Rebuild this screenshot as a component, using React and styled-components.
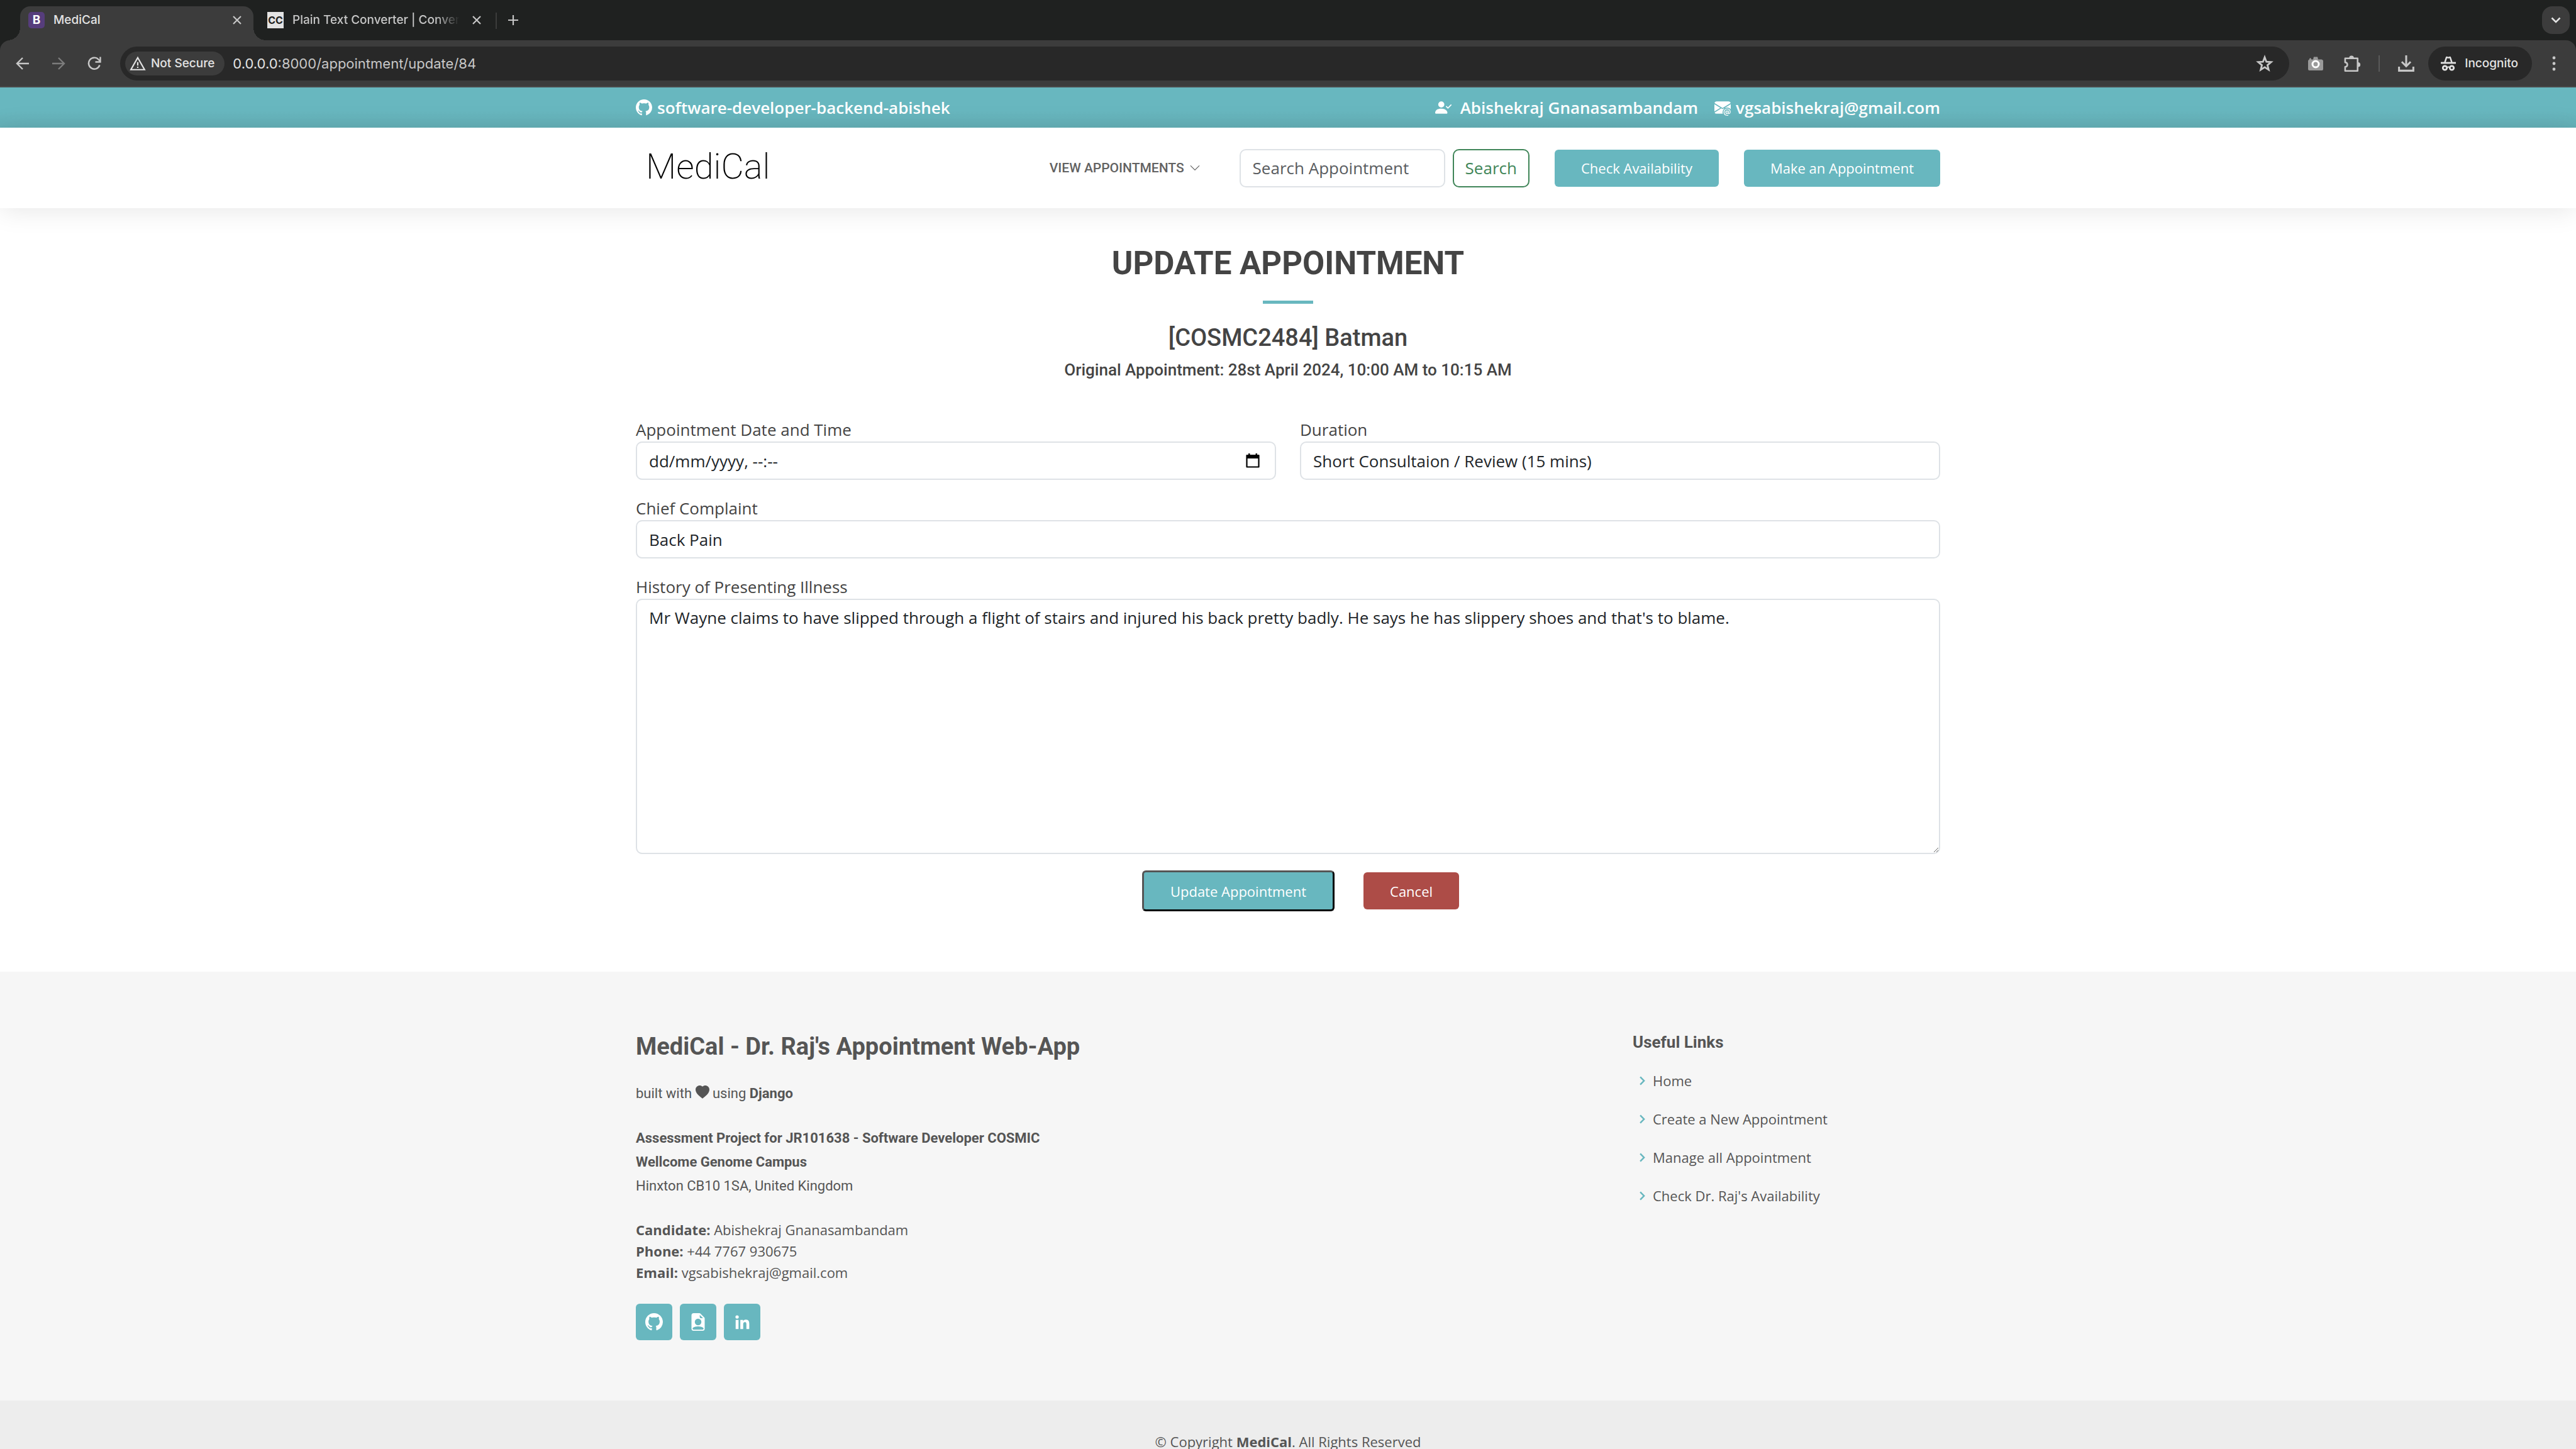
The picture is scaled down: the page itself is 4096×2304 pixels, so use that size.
import React, { useState } from "react";
import styled, { createGlobalStyle, css } from "styled-components";
import {
  BsGithub,
  BsPersonCheckFill,
  BsEnvelopeAtFill,
  BsChevronDown,
  BsHeartFill,
  BsFileEarmarkPersonFill,
} from "react-icons/bs";
import { BiChevronRight, BiLogoLinkedin } from "react-icons/bi";

const ACCENT = "#68b7bf";
const SANS = `"Open Sans", "Noto Sans", sans-serif`;
const HEADING = `Roboto, "Noto Sans", sans-serif`;
const SYSTEM = `Inter, "Liberation Sans", sans-serif`;

const GlobalStyle = createGlobalStyle`
  *, *::before, *::after { box-sizing: border-box; }
  body { margin: 0; background: #fff; color: #444; font-family: ${SANS}; font-size: 26px; line-height: 38px; }
  h1, h2, h3, h4, h5, h6, p, ul { margin: 0; padding: 0; }
  ul { list-style: none; }
  a { color: inherit; text-decoration: none; }
  button, input, select, textarea { font: inherit; color: inherit; margin: 0; }
  button { cursor: pointer; }
  svg { display: block; flex: none; }
`;

/* ---------- browser window ---------- */

const Window = styled.div`
  height: 100vh;
  overflow: hidden;
`;

const Chrome = styled.header`
  font-family: ${SYSTEM};
  background: #1f2120;
  color: #c7c7c7;
`;

const TabStrip = styled.div`
  display: flex;
  align-items: flex-end;
  height: 64px;
  padding: 0 10px 0 32px;
`;

const Tab = styled.div`
  display: flex;
  align-items: center;
  gap: 14px;
  height: 54px;
  width: ${(p) => (p.$active ? 371 : 365)}px;
  padding: ${(p) => (p.$active ? "0 18px 10px 13px" : "0 2px 10px 22px")};
  border-radius: 16px 16px 0 0;
  background: ${(p) => (p.$active ? "#3c3c3c" : "transparent")};
  color: ${(p) => (p.$active ? "#e3e3e3" : "#c7c7c7")};
  position: relative;
  ${(p) =>
    p.$active &&
    css`
      &::before,
      &::after {
        content: "";
        position: absolute;
        bottom: 0;
        width: 20px;
        height: 20px;
      }
      &::before {
        left: -20px;
        background: radial-gradient(circle at 0 0, transparent 20px, #3c3c3c 20px);
      }
      &::after {
        right: -20px;
        background: radial-gradient(circle at 100% 0, transparent 20px, #3c3c3c 20px);
      }
    `}
`;

const Favicon = styled.span`
  display: grid;
  place-items: center;
  flex: none;
  width: 26px;
  height: 26px;
  border-radius: ${(p) => (p.$square ? 0 : 5)}px;
  background: ${(p) => p.$bg};
  color: ${(p) => p.$fg};
  font-size: ${(p) => (p.$square ? 16 : 19)}px;
  font-weight: 700;
  line-height: 26px;
`;

const TabTitle = styled.span`
  flex: 1;
  min-width: 0;
  overflow: hidden;
  white-space: nowrap;
  font-size: 19px;
  font-weight: 500;
  line-height: 26px;
  ${(p) => p.$fade && css`mask-image: linear-gradient(90deg, #000 84%, transparent 98%);`}
`;

const IconButton = styled.button`
  display: grid;
  place-items: center;
  flex: none;
  width: ${(p) => p.$size || 32}px;
  height: ${(p) => p.$size || 32}px;
  padding: 0;
  border: 0;
  border-radius: ${(p) => (p.$filled ? 16 : 8)}px;
  background: ${(p) => (p.$filled ? "#3c3c3c" : "transparent")};
  color: ${(p) => p.$color || "#c7c7c7"};
`;

const TabClose = styled(IconButton)`
  width: 16px;
  height: 16px;
`;

const StripDivider = styled.span`
  width: 2px;
  height: 26px;
  margin: 0 10px 18px 20px;
  background: #3c3c3c;
`;

const StripAction = styled.div`
  display: flex;
  align-items: center;
  height: 54px;
  padding-bottom: 10px;
  margin-left: ${(p) => (p.$end ? "auto" : 0)};
`;

const Toolbar = styled.div`
  display: flex;
  align-items: center;
  height: 75px;
  padding: 10px 19px 9px 20px;
  border-bottom: 2px solid #4a4a4a;
  border-radius: 16px 16px 0 0;
  background: #3c3c3c;
`;

const NavButtons = styled.div`
  display: flex;
  gap: 25px;
  margin-right: 25px;
`;

const AddressBar = styled.div`
  display: flex;
  align-items: center;
  flex: 1;
  height: 54px;
  padding: 0 23px 0 8px;
  border-radius: 27px;
  background: #282828;
`;

const SecurityChip = styled.button`
  display: flex;
  align-items: center;
  gap: 8px;
  height: 38px;
  padding: 0 16px 0 7px;
  border: 0;
  border-radius: 19px;
  background: #3c3c3c;
  color: #e3e3e3;
  font-size: 19px;
  font-weight: 500;
`;

const Url = styled.span`
  flex: 1;
  margin-left: 13px;
  font-size: 22px;
  line-height: 30px;
  color: #c7c7c7;

  b {
    font-weight: 400;
    color: #e3e3e3;
  }
`;

const ToolbarActions = styled.div`
  display: flex;
  align-items: center;
  gap: 26px;
  margin-left: 26px;
`;

const ToolbarDivider = styled.span`
  width: 2px;
  height: 26px;
  background: #5a5a5a;
`;

const IncognitoChip = styled.button`
  display: flex;
  align-items: center;
  gap: 14px;
  height: 54px;
  margin: 0 -7px;
  padding: 0 22px 0 20px;
  border: 0;
  border-radius: 27px;
  background: #282828;
  color: #e3e3e3;
  font-size: 19px;
  font-weight: 500;
`;

const Stroke = ({ size, box = 24, width = 2, children }) => (
  <svg width={size} height={size} viewBox={`0 0 ${box} ${box}`} fill="none" stroke="currentColor" strokeWidth={width} aria-hidden="true">
    {children}
  </svg>
);

const CloseIcon = () => (
  <Stroke size={16} box={16} width={2.2}><path d="M2 2l12 12M14 2L2 14" /></Stroke>
);
const BackIcon = () => (
  <Stroke size={24} width={2.4}><path d="M22 12H4M12 3l-9 9 9 9" /></Stroke>
);
const ForwardIcon = () => (
  <Stroke size={24} width={2.4}><path d="M2 12h18M12 3l9 9-9 9" /></Stroke>
);
const ReloadIcon = () => (
  <Stroke size={24} width={2.4}><path d="M20.5 14.5a9 9 0 1 1-2-9l2.5 2.5M21.500 1.500v8h-8" /></Stroke>
);
const WarnIcon = () => (
  <Stroke size={26} width={2}><path d="M12 3.500L22 21H2zM12 10v5M12 16.500v2" /></Stroke>
);
const StarIcon = () => (
  <Stroke size={28} width={2.4}><path d="M12 3.500l2.300 6.100 6.500.4-5 4.200 1.600 6.300-5.400-3.500-5.400 3.500 1.600-6.300-5-4.200 6.500-.4z" /></Stroke>
);
const DownloadIcon = () => (
  <Stroke size={26} width={2.8}><path d="M12 0v16M5.500 9.500l6.500 6.500 6.500-6.500M1.500 16.500v6h21v-6" /></Stroke>
);
const PuzzleIcon = () => (
  <Stroke size={28} width={2.2}>
    <path d="M2.500 5h17v17h-17v-5.500c4 0 4-6 0-6z" strokeLinejoin="round" />
    <path d="M9 4.500a2.200 2.200 0 0 1 4.400 0zM20 11.300a2.200 2.200 0 0 1 0 4.400z" fill="currentColor" />
  </Stroke>
);
const CameraIcon = () => (
  <svg width="24" height="24" viewBox="0 0 24 24" aria-hidden="true">
    <path d="M0 8q0-2 2-2.500V4.500L3.500 3 5 4.500v1h3L9 1.500h6l1 4h5.500Q24 6 24 8v13q0 2-2 2H2q-2 0-2-2z" fill="#9a9a9a" />
    <circle cx="12" cy="13" r="5" fill="#9a9a9a" stroke="#fff" strokeWidth="3" />
  </svg>
);
const IncognitoIcon = () => (
  <svg width="24" height="24" viewBox="0 0 24 24" fill="none" stroke="currentColor" aria-hidden="true">
    <path d="M6.500 10L9 2.500q.3-.7 1-.4l2 .7 2-.7q.7-.3 1 .4L17.500 10" strokeWidth="2.4" />
    <path d="M0 11h24" strokeWidth="2.8" />
    <circle cx="6.500" cy="19" r="3.200" strokeWidth="2.8" />
    <circle cx="17.500" cy="19" r="3.200" strokeWidth="2.8" />
    <path d="M9.500 18q2.500-1 5 0" strokeWidth="2" />
  </svg>
);
const DotsIcon = () => (
  <svg width="24" height="24" viewBox="0 0 24 24" fill="currentColor" aria-hidden="true">
    <circle cx="12" cy="3" r="2.400" /><circle cx="12" cy="12" r="2.400" /><circle cx="12" cy="21" r="2.400" />
  </svg>
);

function BrowserChrome() {
  return (
    <Chrome>
      <TabStrip>
        <Tab $active>
          <Favicon $bg="#563d7c" $fg="#fff">B</Favicon>
          <TabTitle>MediCal</TabTitle>
          <TabClose aria-label="Close tab"><CloseIcon /></TabClose>
        </Tab>
        <Tab>
          <Favicon $square $bg="#e3e3e3" $fg="#1f2120">CC</Favicon>
          <TabTitle $fade>Plain Text Converter | Convert</TabTitle>
          <TabClose aria-label="Close tab"><CloseIcon /></TabClose>
        </Tab>
        <StripDivider />
        <StripAction>
          <IconButton aria-label="New tab">
            <Stroke size={18} box={18} width={2.2}><path d="M9 1v16M1 9h16" /></Stroke>
          </IconButton>
        </StripAction>
        <StripAction $end>
          <IconButton $filled $size={44} $color="#e3e3e3" aria-label="Search tabs">
            <Stroke size={16} box={16} width={2.6}><path d="M1.500 4.500L8 11l6.500-6.500" /></Stroke>
          </IconButton>
        </StripAction>
      </TabStrip>
      <Toolbar>
        <NavButtons>
          <IconButton aria-label="Back"><BackIcon /></IconButton>
          <IconButton $color="#7c7c7c" aria-label="Forward"><ForwardIcon /></IconButton>
          <IconButton aria-label="Reload"><ReloadIcon /></IconButton>
        </NavButtons>
        <AddressBar>
          <SecurityChip><WarnIcon />Not Secure</SecurityChip>
          <Url><b>0.0.0.0</b>:8000/appointment/update/84</Url>
          <IconButton aria-label="Bookmark"><StarIcon /></IconButton>
        </AddressBar>
        <ToolbarActions>
          <IconButton aria-label="Screenshot extension"><CameraIcon /></IconButton>
          <IconButton aria-label="Extensions"><PuzzleIcon /></IconButton>
          <ToolbarDivider />
          <IconButton aria-label="Downloads"><DownloadIcon /></IconButton>
          <IncognitoChip><IncognitoIcon />Incognito</IncognitoChip>
          <IconButton aria-label="Menu"><DotsIcon /></IconButton>
        </ToolbarActions>
      </Toolbar>
    </Chrome>
  );
}

/* ---------- shared page parts ---------- */

const Container = styled.div`
  width: 100%;
  max-width: 2112px;
  margin: 0 auto;
  padding: 0 19px;
`;

const control = css`
  width: 100%;
  padding: 9px 19px;
  border: 2px solid #dee2e6;
  border-radius: 10px;
  background: #fff;
  color: #212529;
  line-height: 38px;
  outline: none;
`;

const Input = styled.input`
  ${control}
  height: 61px;
  &::placeholder {
    color: #595c5f;
    opacity: 1;
  }
`;

const Select = styled.select`
  ${control}
  height: 61px;
  appearance: none;
`;

const TextArea = styled.textarea`
  ${control}
  display: block;
  height: 406px;
  resize: vertical;
`;

const ActionButton = styled.button`
  height: 59px;
  margin-left: 40px;
  padding: 0 42px;
  border: 0;
  border-radius: 6px;
  background: ${(p) => (p.$danger ? "#ad4c47" : ACCENT)};
  color: #fff;
  font-size: 22px;
  line-height: 34px;
  white-space: nowrap;
  ${(p) =>
    p.$raised &&
    css`
      height: 65px;
      border: 3px solid;
      border-color: #555 #000 #000 #555;
    `}
`;

/* ---------- top bar and header ---------- */

const TopBar = styled.div`
  background: linear-gradient(${ACCENT} 60%, #64afb6);
  color: #fff;
  font-weight: 600;
`;

const TopBarRow = styled(Container)`
  display: flex;
  align-items: center;
  justify-content: space-between;
  height: 64px;
`;

const Contact = styled.a`
  display: flex;
  align-items: center;
  gap: ${(p) => p.$gap || 8}px;
`;

const ContactGroup = styled.div`
  display: flex;
  gap: 26px;
`;

const SiteHeader = styled.header`
  position: relative;
  background: #fff;
  box-shadow: 0 3px 40px rgba(0, 0, 0, 0.1);
`;

const HeaderRow = styled(Container)`
  display: flex;
  align-items: center;
  height: 128px;
`;

const Logo = styled.a`
  padding: 0 0 4px 16px;
  margin-right: auto;
  color: #000;
  font-family: ${HEADING};
  font-size: 56px;
  font-weight: 200;
  line-height: 64px;
`;

const NavLink = styled.a`
  display: flex;
  align-items: center;
  gap: 8px;
  margin-right: 62px;
  color: #626262;
  font-family: ${HEADING};
  font-size: 21px;
  font-weight: 500;
  text-transform: uppercase;
`;

const SearchForm = styled.form`
  display: flex;
  gap: 12px;
`;

const SearchField = styled.div`
  width: 327px;
`;

const SearchButton = styled.button`
  height: 61px;
  padding: 0 18px;
  border: 2px solid #3f8558;
  border-radius: 10px;
  background: #fff;
  color: #3f8558;
`;

function PageHeader() {
  return (
    <>
      <TopBar>
        <TopBarRow>
          <Contact href="#github"><BsGithub size={26} />software-developer-backend-abishek</Contact>
          <ContactGroup>
            <Contact href="#profile" $gap={14}><BsPersonCheckFill size={26} />Abishekraj Gnanasambandam</Contact>
            <Contact href="mailto:vgsabishekraj@gmail.com"><BsEnvelopeAtFill size={26} />vgsabishekraj@gmail.com</Contact>
          </ContactGroup>
        </TopBarRow>
      </TopBar>
      <SiteHeader>
        <HeaderRow>
          <Logo href="#home">MediCal</Logo>
          <NavLink href="#appointments">View Appointments<BsChevronDown size={18} /></NavLink>
          <SearchForm onSubmit={(e) => e.preventDefault()}>
            <SearchField>
              <Input type="search" placeholder="Search Appointment" aria-label="Search Appointment" />
            </SearchField>
            <SearchButton>Search</SearchButton>
          </SearchForm>
          <ActionButton>Check Availability</ActionButton>
          <ActionButton>Make an Appointment</ActionButton>
        </HeaderRow>
      </SiteHeader>
    </>
  );
}

/* ---------- update form ---------- */

const Main = styled.main`
  padding: 57px 0 96px;
`;

const Title = styled.h2`
  font-family: ${HEADING};
  font-size: 51px;
  font-weight: 700;
  line-height: 62px;
  text-align: center;
  text-transform: uppercase;

  &::after {
    content: "";
    display: block;
    width: 80px;
    height: 5px;
    margin: 28px auto 31px;
    background: ${ACCENT};
  }
`;

const Patient = styled.h4`
  font-family: ${HEADING};
  font-size: 38px;
  font-weight: 500;
  line-height: 46px;
  text-align: center;
`;

const Original = styled.h6`
  margin: 12px 0 60px;
  font-family: ${HEADING};
  font-size: 26px;
  font-weight: 500;
  line-height: 32px;
  text-align: center;
`;

const Form = styled.form`
  display: grid;
  grid-template-columns: 1fr 1fr;
  gap: 26px 38px;
`;

const FieldBox = styled.div`
  grid-column: ${(p) => (p.$wide ? "1 / -1" : "auto")};
`;

const Label = styled.label`
  display: block;
  line-height: 38px;
`;

const DateBox = styled.div`
  position: relative;
`;

const PickerButton = styled(IconButton)`
  position: absolute;
  top: 14px;
  right: 21px;
  color: #000;
`;

const FormActions = styled.div`
  grid-column: 1 / -1;
  display: flex;
  align-items: center;
  justify-content: center;
  gap: 6px;
`;

function Field({ id, label, wide, children }) {
  return (
    <FieldBox $wide={wide}>
      <Label htmlFor={id}>{label}</Label>
      {children}
    </FieldBox>
  );
}

function UpdateForm() {
  const [date, setDate] = useState("dd/mm/yyyy, --:--");
  return (
    <Main>
      <Container>
        <Title>Update Appointment</Title>
        <Patient>[COSMC2484] Batman</Patient>
        <Original>Original Appointment: 28st April 2024, 10:00 AM to 10:15 AM</Original>
        <Form onSubmit={(e) => e.preventDefault()}>
          <Field id="date" label="Appointment Date and Time">
            <DateBox>
              <Input id="date" value={date} onChange={(e) => setDate(e.target.value)} />
              <PickerButton type="button" aria-label="Open date picker">
                <svg width="22" height="24" viewBox="0 0 22 24" aria-hidden="true">
                  <path d="M1.500 4h19v18.500h-19z" fill="none" stroke="#000" strokeWidth="2.200" strokeLinejoin="round" />
                  <path d="M1 4h20v5H1zM4 1h2.500v4H4zM15.500 1H18v4h-2.500z" />
                </svg>
              </PickerButton>
            </DateBox>
          </Field>
          <Field id="duration" label="Duration">
            <Select id="duration" defaultValue="15">
              <option value="15">Short Consultaion / Review (15 mins)</option>
            </Select>
          </Field>
          <Field id="complaint" label="Chief Complaint" wide>
            <Input id="complaint" defaultValue="Back Pain" />
          </Field>
          <Field id="history" label="History of Presenting Illness" wide>
            <TextArea
              id="history"
              spellCheck="false"
              defaultValue="Mr Wayne claims to have slipped through a flight of stairs and injured his back pretty badly. He says he has slippery shoes and that's to blame."
            />
          </Field>
          <FormActions>
            <ActionButton $raised>Update Appointment</ActionButton>
            <ActionButton $danger type="button">Cancel</ActionButton>
          </FormActions>
        </Form>
      </Container>
    </Main>
  );
}

/* ---------- footer ---------- */

const Footer = styled.footer`
  background: #f6f6f6;
  color: #555;
  font-size: 22px;
  line-height: 34px;
`;

const FooterGrid = styled(Container)`
  display: grid;
  grid-template-columns: 1fr 489px;
  padding-top: 96px;
  padding-bottom: 96px;
`;

const About = styled.section`
  display: grid;
  gap: 33px;
  justify-items: start;
`;

const FooterTitle = styled.h3`
  font-family: ${HEADING};
  font-size: 38px;
  font-weight: 700;
  line-height: 46px;
`;

const Credits = styled.p`
  font-family: ${HEADING};
  line-height: 38px;

  svg {
    display: inline-block;
    vertical-align: -2px;
  }
`;

const Socials = styled.div`
  display: flex;
  gap: 12px;
`;

const Social = styled.a`
  display: grid;
  place-items: center;
  width: 58px;
  height: 58px;
  border-radius: 6px;
  background: ${ACCENT};
  color: #fff;
`;

const LinksTitle = styled.h4`
  font-family: ${HEADING};
  font-size: 26px;
  font-weight: 700;
  line-height: 32px;
`;

const LinkList = styled.ul`
  display: grid;
  gap: 27px;
  padding-top: 28px;
`;

const LinkItem = styled.li`
  display: flex;
  align-items: center;
  gap: 3px;

  svg {
    color: ${ACCENT};
  }
`;

const Copyright = styled.div`
  padding: 48px 0;
  background: #ededed;
  text-align: center;
`;

const LINKS = ["Home", "Create a New Appointment", "Manage all Appointment", "Check Dr. Raj's Availability"];

function PageFooter() {
  return (
    <Footer>
      <FooterGrid>
        <About>
          <FooterTitle>MediCal - Dr. Raj's Appointment Web-App</FooterTitle>
          <Credits>built with <BsHeartFill size={22} /> using <b>Django</b></Credits>
          <Credits>
            <b>Assessment Project for JR101638 - Software Developer COSMIC</b><br />
            <b>Wellcome Genome Campus</b><br />
            Hinxton CB10 1SA, United Kingdom
          </Credits>
          <p>
            <b>Candidate:</b> Abishekraj Gnanasambandam<br />
            <b>Phone:</b> +44 7767 930675<br />
            <b>Email:</b> vgsabishekraj@gmail.com
          </p>
          <Socials>
            <Social href="#github" aria-label="GitHub"><BsGithub size={28} /></Social>
            <Social href="#resume" aria-label="Resume"><BsFileEarmarkPersonFill size={28} /></Social>
            <Social href="#linkedin" aria-label="LinkedIn"><BiLogoLinkedin size={29} /></Social>
          </Socials>
        </About>
        <nav>
          <LinksTitle>Useful Links</LinksTitle>
          <LinkList>
            {LINKS.map((text) => (
              <LinkItem key={text}><BiChevronRight size={29} /><a href="#link">{text}</a></LinkItem>
            ))}
          </LinkList>
        </nav>
      </FooterGrid>
      <Copyright>© Copyright <b>MediCal</b>. All Rights Reserved</Copyright>
    </Footer>
  );
}

export default function App() {
  return (
    <Window>
      <GlobalStyle />
      <BrowserChrome />
      <PageHeader />
      <UpdateForm />
      <PageFooter />
    </Window>
  );
}
